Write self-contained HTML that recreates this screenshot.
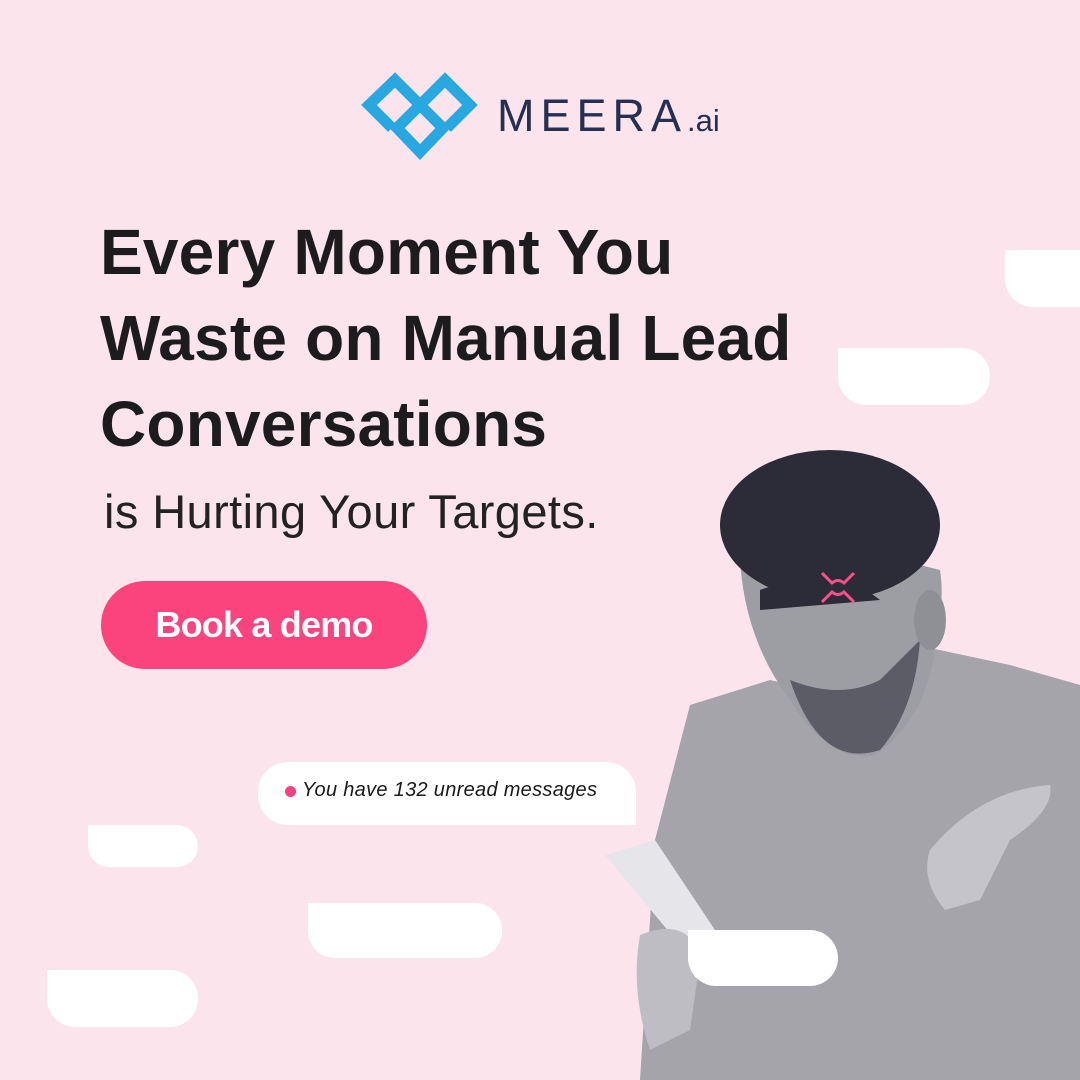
<!DOCTYPE html>
<html><head><meta charset="utf-8"><style>
*{margin:0;padding:0;box-sizing:border-box}
body{width:1080px;height:1080px;background:#fce4ec;position:relative;overflow:hidden;font-family:"Liberation Sans",sans-serif}
.b{position:absolute;background:#fff}
h1{position:absolute;left:100px;top:209px;font-size:64px;line-height:86px;font-weight:bold;color:#1c1c1e;letter-spacing:0.2px;white-space:nowrap}
.sub{position:absolute;left:104px;top:484px;font-size:47px;color:#222;letter-spacing:0.4px}
.btn{position:absolute;left:101px;top:581px;width:326px;height:88px;border-radius:44px;background:#fb437e;color:#fff;font-size:36px;font-weight:bold;text-align:center;line-height:88px;letter-spacing:-0.8px}
.logo{position:absolute;left:497px;top:90px;font-size:45px;color:#252f52;letter-spacing:6px}
</style></head><body>
<svg style="position:absolute;left:0;top:0" width="1080" height="1080">
<g fill="none" stroke="#27a8e1" stroke-width="11" stroke-linejoin="miter">
<path d="M392 128 L369 105 L395 80 L420 105 L445 80 L470 105 L447 128"/>
<path d="M420 105 L443 128 L420 152 L397 128 Z"/>
</g>
<path d="M640 1080 L655 840 L690 705 L770 680 L860 700 L930 648 L1010 665 L1080 685 L1080 1080 Z" fill="#a4a4aa"/>
<path d="M740 560 Q745 640 790 700 Q830 765 875 755 Q925 720 935 650 Q945 600 940 570 L900 560 Z" fill="#9d9da4"/>
<path d="M790 680 Q820 770 880 750 Q915 710 920 640 L880 680 Q840 700 790 680 Z" fill="#5c5c66"/>
<ellipse cx="830" cy="525" rx="110" ry="75" fill="#2c2c38"/>
<path d="M760 590 Q800 575 860 585 L880 600 L760 610 Z" fill="#2c2c38"/>
<ellipse cx="930" cy="620" rx="16" ry="30" fill="#8f8f96"/>
<path d="M930 850 Q980 790 1050 785 Q1055 810 1010 840 L980 900 L945 910 Q920 880 930 850 Z" fill="#c4c4ca"/>
<path d="M605 855 L655 840 L715 930 L680 945 Z" fill="#e6e6ea"/>
<path d="M640 935 Q690 915 700 960 L690 1030 L650 1050 Q630 990 640 935 Z" fill="#bdbdc3"/>
<path d="M822 573 L832 583 Q838 578 844 583 L854 573 M822 602 L832 592 Q838 597 844 592 L854 602" stroke="#ff4f8b" stroke-width="3" fill="none"/>
</svg>
<div class="logo">MEERA<span style="font-size:31px;letter-spacing:0">.ai</span></div>
<h1>Every Moment You<br>Waste on Manual Lead<br>Conversations</h1>
<div class="sub">is Hurting Your Targets.</div>
<div class="btn">Book a demo</div>
<div class="b" style="left:258px;top:762px;width:378px;height:63px;border-radius:30px 30px 0 30px"></div>
<div style="position:absolute;left:285px;top:786px;width:11px;height:11px;border-radius:50%;background:#f4437c"></div>
<div style="position:absolute;left:302px;top:779px;font-size:20px;font-style:italic;color:#1a1a1a;letter-spacing:0.3px">You have 132 unread messages</div>
<div class="b" style="left:88px;top:825px;width:110px;height:42px;border-radius:0 21px 21px 21px"></div>
<div class="b" style="left:308px;top:903px;width:194px;height:55px;border-radius:0 27px 27px 27px"></div>
<div class="b" style="left:47px;top:970px;width:151px;height:57px;border-radius:0 28px 28px 28px"></div>
<div class="b" style="left:1005px;top:250px;width:90px;height:57px;border-radius:0 0 0 28px"></div>
<div class="b" style="left:838px;top:348px;width:152px;height:57px;border-radius:0 28px 28px 28px"></div>
<div class="b" style="left:688px;top:930px;width:150px;height:56px;border-radius:0 28px 28px 28px"></div>
</body></html>
